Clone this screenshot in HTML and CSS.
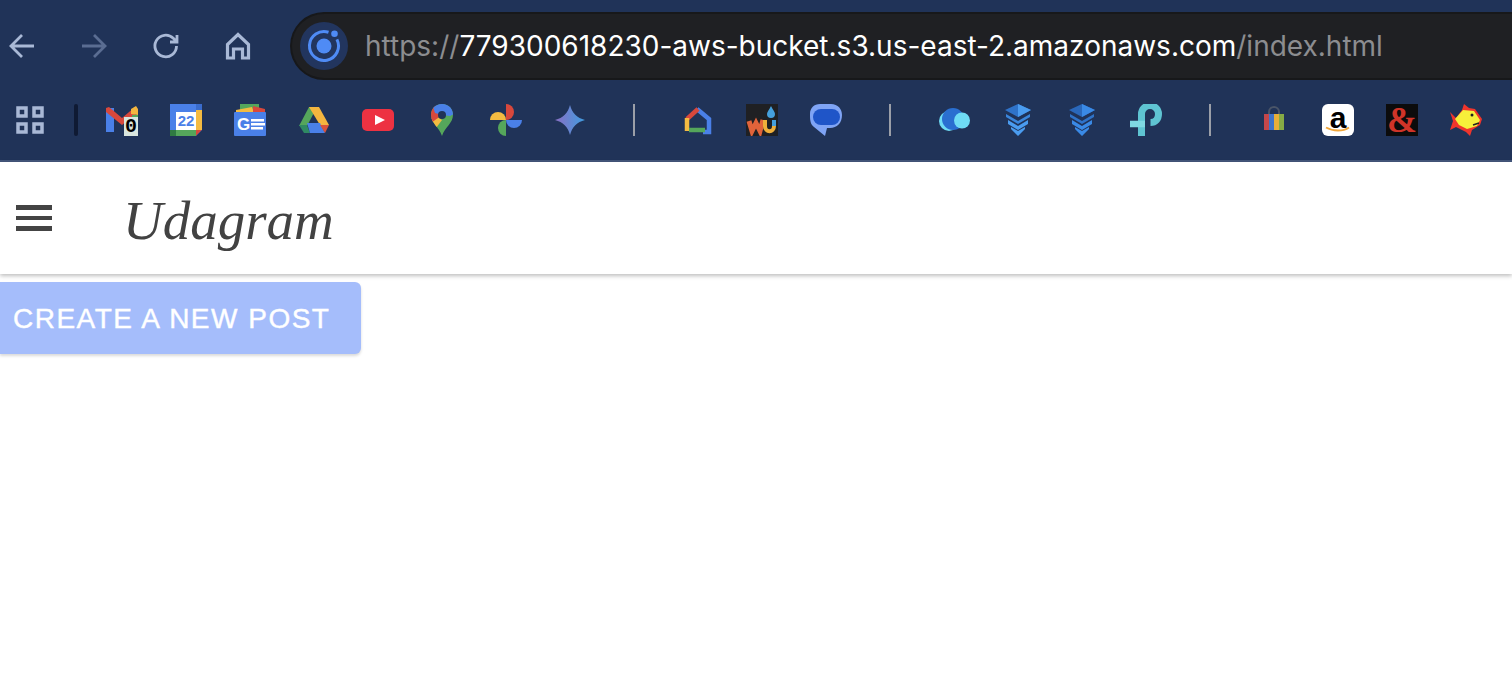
FILE: index.html
```html
<!DOCTYPE html>
<html lang="en">
<head>
    <meta charset="UTF-8">
    <meta name="viewport" content="width=device-width, initial-scale=1.0">
    <title>Udagram</title>
    <link rel="stylesheet" href="styles.css">
</head>
<body>
    <div class="browser-bar">
        <div class="nav-row">
            <div class="nav-buttons">
                <svg class="nav-icon" viewBox="0 0 28 28"><path d="M26 14H3M14 3 3 14l11 11"/></svg>
                <svg class="nav-icon dim" viewBox="0 0 28 28"><path d="M2 14h23M14 3l11 11-11 11"/></svg>
                <svg class="nav-icon" viewBox="0 0 28 28"><path d="M24.500 14a10.800 10.800 0 1 1-3.200-7.700L25 10M25 3v7h-7"/></svg>
                <svg class="nav-icon heavy" viewBox="0 0 28 28"><path d="M3.500 26V12.500L14 2.500l10.500 10V26h-6V17h-9v9z"/></svg>
            </div>
            <div class="omnibox">
                <svg class="site-icon" viewBox="0 0 48 48">
                    <circle cx="24" cy="24" r="24" fill="#22355e"/>
                    <path d="M28.500 10.200A14.500 14.500 0 1 0 36.900 17.400" fill="none" stroke="#4f8bf5" stroke-width="3"/>
                    <circle cx="24" cy="24" r="7.500" fill="#4f8bf5"/>
                    <circle cx="34.500" cy="11.700" r="3.300" fill="#4f8bf5"/>
                </svg>
                <div class="url"><span class="muted">https://</span>779300618230-aws-bucket.s3.us-east-2.amazonaws.com<span class="muted">/index.html</span></div>
            </div>
        </div>
        <div class="bookmarks">
            <svg class="apps-icon" viewBox="0 0 28 28"><path d="M2 2h8v8H2zM18 2h8v8h-8zM2 18h8v8H2zM18 18h8v8h-8z"/></svg>
            <span class="dark-sep"></span>

            <!-- gmail -->
            <div class="mark-wrap">
                <svg class="mark" viewBox="0 0 32 32">
                    <path fill="#4a80e8" d="M0 4h8v24H0z"/>
                    <path fill="#d8483c" d="M0 4l3-1 13 11L29 3l3 3v2L16 21 0 8z"/>
                    <path fill="#f4b63f" d="M25 5l5-3 2 3v6l-7-1z"/>
                    <path fill="#55a65b" d="M26 11h6v6h-6z"/>
                </svg>
                <span class="count-badge">0</span>
            </div>
            <!-- calendar -->
            <svg class="mark" viewBox="0 0 32 32">
                <path fill="#4a80e8" d="M0 0h32v32H0z"/>
                <path fill="#3a6ccc" d="M26 0h6v6h-6z"/>
                <path fill="#f4bb41" d="M26 6h6v20h-6z"/>
                <path fill="#55a65b" d="M0 26h26v6H6z"/>
                <path fill="#2f7a42" d="M0 26h6v6H0z"/>
                <path fill="#d8483c" d="M26 26h6l-6 6z"/>
                <path fill="#203358" d="M32 26v6h-6z"/>
                <rect x="6" y="8" width="20" height="18" fill="#fff"/>
                <text class="cal-text" x="16" y="22">22</text>
            </svg>
            <!-- news -->
            <svg class="mark" viewBox="0 0 32 32">
                <path fill="#55a65b" d="M6 0h19v6H6z"/>
                <path fill="#f4bb41" d="M2 6l16-3 2 6H2z"/>
                <path fill="#d8483c" d="M19 2l12 3v4H19z"/>
                <rect y="8" width="32" height="24" rx="1" fill="#4a80e8"/>
                <text class="news-text" x="3" y="26">G</text>
                <path fill="#fff" d="M17 15h13v2.500H17zM17 19h14v2.500H17zM17 23h12v2.500H17z"/>
            </svg>
            <!-- drive -->
            <svg class="mark" viewBox="0 0 32 32">
                <path fill="#55a65b" d="M11 3h8L9 22H1z"/>
                <path fill="#f4b63f" d="M11 3h10l10 18h-9z"/>
                <path fill="#2f8a63" d="M1 21h8l3 8H6z"/>
                <path fill="#4a80e8" d="M9 19h13l5 10H12z"/>
                <path fill="#d8543c" d="M22 21h9l-4 8z"/>
            </svg>
            <!-- youtube -->
            <svg class="mark" viewBox="0 0 32 32">
                <rect y="5" width="32" height="22" rx="5" fill="#ed3242"/>
                <path fill="#fff" d="M13 11l10 5-10 5z"/>
            </svg>
            <!-- maps -->
            <svg class="mark" viewBox="0 0 32 32">
                <defs>
                    <clipPath id="pin"><path d="M16 0C9 0 5 5 5 11c0 8 8 12 11 21 3-9 11-13 11-21C27 5 23 0 16 0z"/></clipPath>
                </defs>
                <g clip-path="url(#pin)">
                    <path fill="#55a65b" d="M0 0h32v32H0z"/>
                    <path fill="#f4bb41" d="M0 15l13-1 3 2-6 8-10 2z"/>
                    <path fill="#d8483c" d="M0 0h9l7 11-11 8H0z"/>
                    <path fill="#4a80e8" d="M6 0h24v9l-6 3-8-1-7-2z"/>
                </g>
                <circle cx="16" cy="11" r="4" fill="#203358"/>
            </svg>
            <!-- photos -->
            <svg class="mark" viewBox="0 0 32 32">
                <path fill="#f4bb41" d="M0 16a8 8 0 0 1 16 0z"/>
                <path fill="#d8483c" d="M16 0a8 8 0 0 1 0 16z"/>
                <path fill="#4a80e8" d="M32 16a8 8 0 0 1-16 0z"/>
                <path fill="#55a65b" d="M16 32a8 8 0 0 1 0-16z"/>
            </svg>
            <!-- gemini -->
            <svg class="mark" viewBox="0 0 32 32">
                <defs>
                    <linearGradient id="gem" x1="0" x2="1" y1="0.500" y2="0.500">
                        <stop offset="0" stop-color="#8a6fc4"/>
                        <stop offset="1" stop-color="#3f9de0"/>
                    </linearGradient>
                </defs>
                <path fill="url(#gem)" d="M16 1C18 9 23 14 31 16 23 18 18 23 16 31 14 23 9 18 1 16 9 14 14 9 16 1z"/>
            </svg>
            <span class="sep"></span>

            <!-- google home -->
            <svg class="mark" viewBox="0 0 32 32">
                <path fill="none" stroke="#4a80e8" stroke-width="4.500" d="M15 5l12 10v13h-6"/>
                <path fill="none" stroke="#d8483c" stroke-width="4.500" d="M5 15 16 5"/>
                <path fill="none" stroke="#f4bb41" stroke-width="4.500" d="M5 14v13"/>
                <path fill="none" stroke="#55a65b" stroke-width="4.500" d="M7 26h16"/>
            </svg>
            <!-- wunderground -->
            <svg class="mark" viewBox="0 0 32 32">
                <rect width="32" height="32" fill="#1f2023"/>
                <path fill="#45a0dc" d="M25 2c2 4 4 6 4 8a4 4 0 0 1-8 0c0-2 2-4 4-8z"/>
                <path fill="none" stroke="#e0633a" stroke-width="5" d="M3 17l3 10 4-8 4 8 3-11"/>
                <path fill="none" stroke="#f0b03a" stroke-width="4" d="M19 16v6c0 7 9 7 9 0"/>
                <path fill="none" stroke="#45a0dc" stroke-width="4" d="M28 22v-6"/>
            </svg>
            <!-- messages -->
            <svg class="mark" viewBox="0 0 32 32">
                <path fill="#7fa4f5" d="M10 0h11c7 0 11 5 11 11 0 8-5 13-12 13h-3l-2 8-11-9C0 20 0 15 0 10 0 4 4 0 10 0z"/>
                <rect x="3" y="5" width="27" height="16" rx="8" fill="#1f55c8"/>
            </svg>
            <span class="sep"></span>

            <!-- cloud thing -->
            <svg class="mark" viewBox="0 0 32 32">
                <circle cx="11" cy="17" r="10" fill="#6fdcf5"/>
                <circle cx="15" cy="15" r="11" fill="#2a6fd0"/>
                <circle cx="24" cy="16.500" r="8" fill="#6fdcf5"/>
            </svg>
            <!-- stacks -->
            <svg class="mark" viewBox="0 0 32 32">
                <path fill="#2f73c9" d="M3 6l13-6 13 6-13 7z"/>
                <path fill="#4a9cf0" d="M16 0l13 6-13 7z"/>
                <path fill="#3a86dc" d="M4 10l12 7 12-7v3l-12 7-12-7z"/>
                <path fill="#4a9cf0" d="M6 16l10 6 10-6v4l-10 6-10-6z"/>
                <path fill="#4a9cf0" d="M9 23l7 4 7-4v2l-7 7-7-7z"/>
            </svg>
            <svg class="mark" viewBox="0 0 32 32">
                <path fill="#2a68bb" d="M3 6l13-6 13 6-13 7z"/>
                <path fill="#3a8ae6" d="M16 0l13 6-13 7z"/>
                <path fill="#2f73c9" d="M4 10l12 7 12-7v3l-12 7-12-7z"/>
                <path fill="#3a8ae6" d="M6 16l10 6 10-6v4l-10 6-10-6z"/>
                <path fill="#3a8ae6" d="M9 23l7 4 7-4v2l-7 7-7-7z"/>
            </svg>
            <!-- tp-link -->
            <svg class="mark" viewBox="0 0 32 32">
                <path fill="none" stroke="#5fc4d2" stroke-width="7" d="M11.500 32V10a8.500 8.500 0 0 1 17 0c0 5-3 8.500-8 8.500"/>
                <path fill="none" stroke="#7fd8e2" stroke-width="6.500" d="M0 20h15"/>
            </svg>
            <span class="sep"></span>

            <!-- shopping bag -->
            <svg class="mark" viewBox="0 0 32 32">
                <path fill="none" stroke="#4a5568" stroke-width="2" d="M11 11V8a5 5 0 0 1 10 0v3"/>
                <path fill="#c4474a" d="M6 10h5v16H6z"/>
                <path fill="#3f73c9" d="M11 10h5v16h-5z"/>
                <path fill="#e8ae3a" d="M16 10h5v16h-5z"/>
                <path fill="#86ab45" d="M21 10h5v16h-5z"/>
            </svg>
            <!-- amazon -->
            <div class="mark-wrap amazon">
                <span class="amazon-a">a</span>
                <svg class="smile" viewBox="0 0 32 8"><path fill="none" stroke="#f0a63a" stroke-width="2" d="M4 1.500c7 4 17 4 23 0"/></svg>
            </div>
            <!-- dnd -->
            <div class="mark-wrap dnd">&amp;</div>
            <!-- fish -->
            <svg class="mark" viewBox="0 0 32 32">
                <path fill="#f0352c" d="M0 8l6 6L12 6l2-6 5 4 6 1 7 10-2 6-8 5-2 6-4-4-6-3-4-2-6 3 3-9z"/>
                <path fill="#f7f03a" d="M5 15l8-9 11 1 6 9-3 6-10 3-8-4z"/>
                <circle cx="22" cy="11" r="1.500" fill="#222"/>
                <path fill="none" stroke="#222" stroke-width="1.500" d="M29 19l-6 2"/>
            </svg>
        </div>
    </div>

    <header class="app-header">
        <div class="menu-button">
            <span></span>
            <span></span>
            <span></span>
        </div>
        <div class="app-title">Udagram</div>
    </header>

    <button class="new-post">CREATE A NEW POST</button>
</body>
</html>
```

FILE: styles.css
```css
html, body {
    height: 100%;
}

body {
    margin: 0;
    background-color: #fff;
    font-family: "Liberation Sans", Arial, sans-serif;
    overflow: hidden;
}

.browser-bar {
    box-sizing: border-box;
    height: 162px;
    padding-top: 12px;
    background-color: #203358;
    border-bottom: 2px solid #43557a;
    overflow: hidden;
}

.nav-row {
    display: flex;
    align-items: center;
    height: 68px;
}

.nav-buttons {
    display: flex;
    gap: 44px;
    width: 290px;
    flex-shrink: 0;
    padding-left: 8px;
    box-sizing: border-box;
}

.nav-icon {
    width: 28px;
    height: 28px;
    fill: none;
    stroke: #a9b9d6;
    stroke-width: 2.8;
}

.nav-icon.dim {
    stroke: #5a6d92;
}

.nav-icon.heavy {
    stroke-width: 3.2;
}

.omnibox {
    display: flex;
    align-items: center;
    flex-grow: 1;
    box-sizing: border-box;
    height: 68px;
    padding-left: 8px;
    background-color: #1f2023;
    border: 2px solid #17181a;
    border-right: none;
    border-radius: 34px 0 0 34px;
}

.site-icon {
    width: 48px;
    height: 48px;
    flex-shrink: 0;
}

.url {
    margin-left: 17px;
    font-family: Inter, Roboto, sans-serif;
    font-size: 28px;
    color: #fff;
    white-space: nowrap;
}

.muted {
    color: #8c8d90;
}

.bookmarks {
    display: flex;
    align-items: center;
    gap: 32px;
    padding: 24px 0 0 16px;
}

.apps-icon {
    width: 28px;
    height: 28px;
    fill: none;
    stroke: #a9b9d6;
    stroke-width: 3.5;
}

.dark-sep {
    width: 4px;
    height: 32px;
    margin: 0 -4px 0 -2px;
    background-color: #0f1a33;
    border-radius: 2px;
}

.mark-wrap {
    position: relative;
    width: 32px;
    height: 32px;
    flex-shrink: 0;
}

.mark {
    display: block;
    width: 32px;
    height: 32px;
    flex-shrink: 0;
}

.count-badge {
    position: absolute;
    right: 0;
    bottom: 0;
    width: 14px;
    height: 19px;
    background-color: #d9e6df;
    font-family: "Liberation Mono", monospace;
    font-size: 20px;
    font-weight: bold;
    line-height: 19px;
    text-align: center;
    color: #000;
}

.sep {
    width: 2px;
    height: 32px;
    margin: 0 15px;
    background-color: #9b9fa8;
}

.cal-text {
    font-family: "Liberation Sans", sans-serif;
    font-size: 15px;
    font-weight: bold;
    text-anchor: middle;
    fill: #4a80e8;
}

.news-text {
    font-family: "Liberation Sans", sans-serif;
    font-size: 17px;
    font-weight: bold;
    fill: #fff;
}

.amazon {
    background-color: #fff;
    border-radius: 6px;
    text-align: center;
}

.amazon-a {
    display: block;
    font-size: 30px;
    font-weight: bold;
    line-height: 27px;
    color: #000;
}

.smile {
    position: absolute;
    left: 0;
    bottom: 2px;
    width: 32px;
    height: 8px;
}

.dnd {
    background-color: #0c0c0c;
    font-family: "Liberation Serif", serif;
    font-size: 36px;
    font-weight: bold;
    line-height: 32px;
    text-align: center;
    color: #d03428;
}

.app-header {
    display: flex;
    align-items: center;
    box-sizing: border-box;
    height: 112px;
    padding-left: 16px;
    background-color: #fff;
    box-shadow: 0 2px 4px rgba(0, 0, 0, 0.25);
}

.menu-button {
    display: flex;
    flex-direction: column;
    gap: 6px;
    width: 36px;
}

.menu-button span {
    height: 4.5px;
    background-color: #444;
}

.app-title {
    margin: 4px 0 0 71px;
    font-family: "Liberation Serif", serif;
    font-style: italic;
    font-size: 55px;
    color: #424242;
}

.new-post {
    display: block;
    box-sizing: border-box;
    width: 361px;
    height: 72px;
    margin: 8px 0 0 0;
    padding: 2px 0 0 13px;
    text-align: left;
    font-family: "Liberation Sans", sans-serif;
    font-size: 28px;
    letter-spacing: 1.5px;
    -webkit-text-stroke: 0.4px #fff;
    color: #fff;
    background-color: #a5bdfb;
    border: none;
    border-radius: 0 6px 6px 0;
    box-shadow: 0 2px 3px rgba(0, 0, 0, 0.15);
}
```
